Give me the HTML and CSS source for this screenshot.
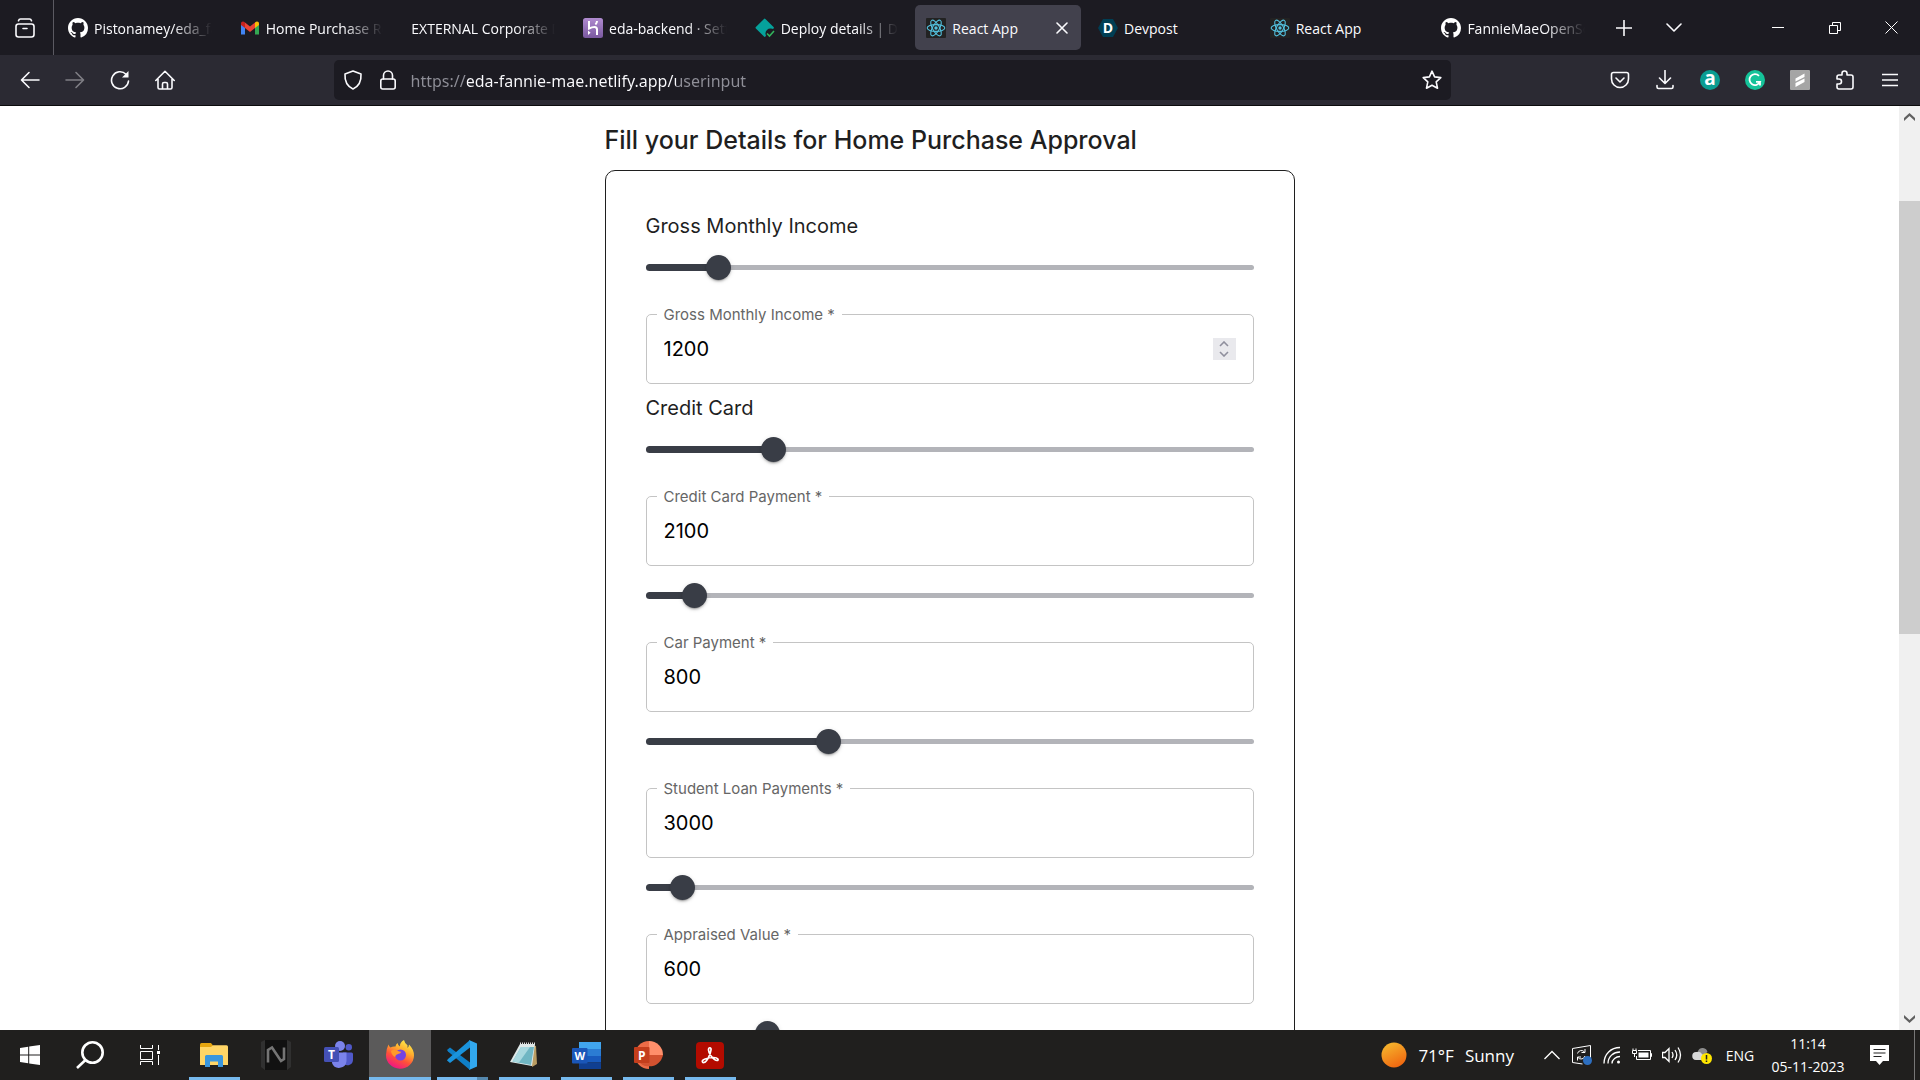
FILE: index.html
```html
<!DOCTYPE html>
<html lang="en">
<head>
<meta charset="utf-8">
<title>React App</title>
<link rel="stylesheet" href="styles.css">
</head>
<body>
<svg class="defs" aria-hidden="true">
  <symbol id="github" viewBox="0 0 16 16"><path fill="#fff" d="M8 0C3.58 0 0 3.58 0 8c0 3.54 2.29 6.53 5.47 7.59.4.07.55-.17.55-.38 0-.19-.01-.82-.01-1.49-2.01.37-2.53-.49-2.69-.94-.09-.23-.48-.94-.82-1.13-.28-.15-.68-.52-.01-.53.63-.01 1.08.58 1.23.82.72 1.21 1.87.87 2.33.66.07-.52.28-.87.51-1.07-1.78-.2-3.64-.89-3.64-3.95 0-.87.31-1.59.82-2.15-.08-.2-.36-1.02.08-2.12 0 0 .67-.21 2.2.82.64-.18 1.32-.27 2-.27.68 0 1.36.09 2 .27 1.53-1.04 2.2-.82 2.2-.82.44 1.1.16 1.92.08 2.12.51.56.82 1.27.82 2.15 0 3.07-1.87 3.75-3.65 3.95.29.25.54.73.54 1.48 0 1.07-.01 1.93-.01 2.2 0 .21.15.46.55.38A8.013 8.013 0 0016 8c0-4.42-3.58-8-8-8z"/></symbol>
  <symbol id="react" viewBox="0 0 20 20"><rect width="20" height="20" rx="1" fill="#222"/><g fill="none" stroke="#53c1de" stroke-width="1.1"><ellipse cx="10" cy="10" rx="8.8" ry="3.4"/><ellipse cx="10" cy="10" rx="8.8" ry="3.4" transform="rotate(60 10 10)"/><ellipse cx="10" cy="10" rx="8.8" ry="3.4" transform="rotate(120 10 10)"/></g><circle cx="10" cy="10" r="1.7" fill="#53c1de"/></symbol>
</svg>

<header class="chrome">
  <div class="tabbar">
    <button class="view" aria-label="Firefox View"><svg width="20" height="20" viewBox="0 0 20 20" class="line"><rect x="1" y="6" width="18" height="13" rx="2.5"/><path d="M3.5 2.8Q4 1 5.5 1h9Q16 1 16.500 2.800M8 10.500h4"/></svg></button>
    <nav class="tabs">
      <div class="tab"><svg class="fav"><use href="#github"/></svg><button class="tab-name fade">Pistonamey/eda_fannie</button></div>
      <div class="tab"><svg class="fav" viewBox="0 0 20 20"><path fill="#4285f4" d="M1 5v11.500h4V9z"/><path fill="#34a853" d="M19 5v11.500h-4V9z"/><path fill="#ea4335" d="M5 4.500l5 4 5-4V10l-5 4-5-4z"/><path fill="#c5221f" d="M1 5.500C1 3.200 3.500 2.800 5 4.500V10L1 7z"/><path fill="#fbbc04" d="M19 5.500C19 3.200 16.500 2.800 15 4.500V10l4-3z"/></svg><button class="tab-name fade">Home Purchase Request</button></div>
      <div class="tab"><button class="tab-name fade">EXTERNAL Corporate Day</button></div>
      <div class="tab"><svg class="fav" viewBox="0 0 20 20"><defs><linearGradient id="hk" x2="0" y2="1"><stop stop-color="#b08bd0"/><stop offset="1" stop-color="#79589f"/></linearGradient></defs><rect width="20" height="20" rx="2.500" fill="url(#hk)"/><path fill="none" stroke="#fff" stroke-width="2" d="M6 3v7.500q3-1.500 5.500-1.500 2.500 0 2.500 2.500V17M14 3q0 2-1.600 3.500"/><path fill="#fff" d="M5 12.500l2.600 2.200L5 17z"/></svg><button class="tab-name fade">eda-backend · Settings</button></div>
      <div class="tab"><svg class="fav" viewBox="0 0 20 20"><rect x="3" y="3" width="13.500" height="13.500" rx="1" fill="#05a29b" transform="rotate(45 9.700 9.700)"/><circle cx="15.500" cy="15.500" r="5" fill="#1c1b22"/><path d="M12 15.500l2.500 2.500 4.500-5" fill="none" stroke="#32b45c" stroke-width="1.600"/></svg><button class="tab-name fade">Deploy details | Deploys</button></div>
      <div class="tab active"><svg class="fav"><use href="#react"/></svg><button class="tab-name">React App</button><button class="close" aria-label="Close tab"><svg width="12" height="12" viewBox="0 0 12 12" class="line"><path d="M1 1l10 10M11 1L1 11"/></svg></button></div>
      <div class="tab"><svg class="fav" viewBox="0 0 20 20"><path fill="#003e54" d="M5 1h10l5 9-5 9H5l-5-9z"/><text x="10" y="15" text-anchor="middle" class="glyph" font-size="14">D</text></svg><button class="tab-name">Devpost</button></div>
      <div class="tab"><svg class="fav"><use href="#react"/></svg><button class="tab-name">React App</button></div>
      <div class="tab"><svg class="fav"><use href="#github"/></svg><button class="tab-name fade">FannieMaeOpenSource</button></div>
    </nav>
    <div class="tab-tools">
      <button aria-label="New tab"><svg width="16" height="16" viewBox="0 0 16 16" class="line"><path d="M8 .5v15M.5 8h15"/></svg></button>
      <button aria-label="List all tabs"><svg width="16" height="10" viewBox="0 0 16 10" class="line"><path d="M1 1l7 7 7-7"/></svg></button>
    </div>
    <div class="window-tools">
      <button aria-label="Minimize"><svg width="12" height="12" viewBox="0 0 12 12" class="thin"><path d="M0 5.500h12"/></svg></button>
      <button aria-label="Restore"><svg width="12" height="12" viewBox="0 0 12 12" class="thin"><path d="M.5 3.500h8v8h-8zM3.500 3V.5h8v8H9"/></svg></button>
      <button aria-label="Close"><svg width="13" height="13" viewBox="0 0 13 13" class="thin"><path d="M.5.5l12 12M12.500.5l-12 12"/></svg></button>
    </div>
  </div>

  <div class="toolbar">
    <div class="tools">
      <button aria-label="Back"><svg width="20" height="20" viewBox="0 0 20 20" class="line"><path d="M19 10H2M9 2.500L1.500 10 9 17.500"/></svg></button>
      <button aria-label="Forward" disabled><svg width="20" height="20" viewBox="0 0 20 20" class="line dim"><path d="M1 10h17M11 2.500l7.500 7.500-7.500 7.500"/></svg></button>
      <button aria-label="Reload"><svg width="20" height="20" viewBox="0 0 20 20" class="line"><path d="M18.500 11a8.500 8.500 0 1 1-2.500-6.800"/><path d="M18.500 1v6.500H12z" fill="#fbfbfe" stroke="none"/></svg></button>
      <button aria-label="Home"><svg width="20" height="20" viewBox="0 0 20 20" class="line"><path d="M.8 10.500L10 1.300l9.200 9.200M3 9v8.500q0 1.500 1.500 1.500h11q1.500 0 1.500-1.500V9M7.500 19v-5q0-1.500 1.500-1.500h2q1.500 0 1.500 1.500v5"/></svg></button>
    </div>
    <div class="spacer"></div>
    <div class="urlbar">
      <button aria-label="Tracking protection"><svg width="20" height="20" viewBox="0 0 20 20" class="line"><path d="M10 1l8 3c.4 6.500-1.500 12-8 15C3.500 16 1.600 10.500 2 4z"/></svg></button>
      <button aria-label="Site security"><svg width="20" height="20" viewBox="0 0 20 20" class="line"><rect x="2.800" y="9" width="14.400" height="10" rx="2"/><path d="M5.500 9V5.500a4.500 4.500 0 0 1 9 0V9"/></svg></button>
      <input class="url" type="text" aria-label="Address" value="https://eda-fannie-mae.netlify.app/userinput">
      <button aria-label="Bookmark this page"><svg width="20" height="20" viewBox="0 0 20 20" class="line"><path d="M10 1.200l2.600 5.700 6.200.7-4.600 4.200 1.300 6.400L10 15.200l-5.500 3 1.300-6.400L1.200 7.600l6.200-.7z"/></svg></button>
    </div>
    <div class="spacer"></div>
    <div class="tools">
      <button aria-label="Pocket"><svg width="20" height="20" viewBox="0 0 20 20" class="line"><path d="M3.500 2.500h13Q18.500 2.500 18.500 4.500V9a8.500 8.500 0 0 1-17 0V4.500Q1.500 2.500 3.500 2.500zM6 8l4 4 4-4"/></svg></button>
      <button aria-label="Downloads"><svg width="20" height="20" viewBox="0 0 20 20" class="line"><path d="M10 .5V13M4.500 8l5.500 5.500L15.500 8M2 15.500v1.500q0 1.500 1.500 1.500h13q1.500 0 1.500-1.500v-1.500"/></svg></button>
      <button aria-label="Extension a"><svg width="20" height="20" viewBox="0 0 20 20"><circle cx="10" cy="10" r="10" fill="#0a9d92"/><text x="10" y="15" text-anchor="middle" class="glyph" font-size="19">a</text></svg></button>
      <button aria-label="Grammarly"><svg width="20" height="20" viewBox="0 0 20 20"><circle cx="10" cy="10" r="10" fill="#15c39a"/><path fill="none" stroke="#fff" stroke-width="1.800" d="M14 5.800a5.500 5.500 0 1 0 1 6H11M15 11v4.500"/></svg></button>
      <button aria-label="Extension S"><svg width="20" height="20" viewBox="0 0 20 20"><rect width="20" height="20" rx="1" fill="#a5a5a5"/><path fill="#fff" d="M5.500 8.500L14.500 3.500V7L5.500 11.500zM5.500 13L14.500 8.500V12L5.500 17z"/></svg></button>
      <button aria-label="Extensions"><svg width="20" height="20" viewBox="0 0 20 20" class="line"><path d="M7 5V3.500a2.500 2.500 0 0 1 5 0V5h4q2 0 2 2v10q0 2-2 2H4q-2 0-2-2v-3h2a2 2 0 0 0 0-5H2V7q0-2 2-2z"/></svg></button>
      <button aria-label="Menu"><svg width="16" height="14" viewBox="0 0 16 14" class="line"><path d="M.5 1.500h15M.5 7h15M.5 12.500h15"/></svg></button>
    </div>
  </div>
</header>

<div class="viewport">
  <main class="page">
    <h1>Fill your Details for Home Purchase Approval</h1>
    <form class="card">
      <h2>Gross Monthly Income</h2>
      <div class="slider"><span class="rail"></span><span class="fill" style="width:12%"></span><input type="range" aria-label="Gross monthly income slider" min="0" max="10000" value="1200"></div>
      <fieldset class="field"><legend><label for="income">Gross Monthly Income *</label></legend><div class="value"><input id="income" type="number" value="1200"><span class="spin"><svg width="10" height="16" viewBox="0 0 10 16"><path d="M1 5L5 1l4 4M1 11l4 4 4-4" fill="none" stroke="#8f8f9d" stroke-width="1.600"/></svg></span></div></fieldset>

      <h2>Credit Card</h2>
      <div class="slider"><span class="rail"></span><span class="fill" style="width:21%"></span><input type="range" aria-label="Credit card payment slider" min="0" max="10000" value="2100"></div>
      <fieldset class="field"><legend><label for="credit">Credit Card Payment *</label></legend><div class="value"><input id="credit" type="number" value="2100"></div></fieldset>

      <div class="slider"><span class="rail"></span><span class="fill" style="width:8%"></span><input type="range" aria-label="Car payment slider" min="0" max="10000" value="800"></div>
      <fieldset class="field"><legend><label for="car">Car Payment *</label></legend><div class="value"><input id="car" type="number" value="800"></div></fieldset>

      <div class="slider"><span class="rail"></span><span class="fill" style="width:30%"></span><input type="range" aria-label="Student loan payments slider" min="0" max="10000" value="3000"></div>
      <fieldset class="field"><legend><label for="loan">Student Loan Payments *</label></legend><div class="value"><input id="loan" type="number" value="3000"></div></fieldset>

      <div class="slider"><span class="rail"></span><span class="fill" style="width:6%"></span><input type="range" aria-label="Appraised value slider" min="0" max="10000" value="600"></div>
      <fieldset class="field"><legend><label for="appraised">Appraised Value *</label></legend><div class="value"><input id="appraised" type="number" value="600"></div></fieldset>

      <div class="slider"><span class="rail"></span><span class="fill" style="width:20%"></span><input type="range" aria-label="Next value slider" min="0" max="10000" value="2000"></div>
    </form>
  </main>
  <div class="scrollbar">
    <button aria-label="Scroll up"><svg width="11" height="9" viewBox="0 0 11 9"><path d="M0 6l5.500-5L11 6v3L5.500 4 0 9z" fill="#606060"/></svg></button>
    <span class="before"></span><span class="thumb"></span><span class="after"></span>
    <button aria-label="Scroll down"><svg width="11" height="9" viewBox="0 0 11 9"><path d="M0 3l5.500 5L11 3V0L5.500 5 0 0z" fill="#606060"/></svg></button>
  </div>
</div>

<footer class="taskbar">
  <div class="system">
    <button aria-label="Start"><svg width="20" height="20" viewBox="0 0 20 20"><path fill="#fff" d="M0 2.900L8.200 1.700v7.800H0zM9.200 1.500L20 0v9.500H9.200zM0 10.500h8.200v7.800L0 17.100zM9.200 10.500H20V20L9.200 18.500z"/></svg></button>
    <button aria-label="Search"><svg width="28" height="28" viewBox="0 0 28 28"><g fill="none" stroke="#fff" stroke-width="2.600"><circle cx="16.500" cy="11.500" r="10.200"/><path d="M9.500 19L1 27"/></g></svg></button>
    <button aria-label="Task view"><svg width="20" height="20" viewBox="0 0 20 20" class="thin"><path d="M.5 0v3.500h12V0M.5 20v-3.500h12V20M.5 6.500h12v8H.5zM18.500 0v5M18.500 10v10"/><path d="M17 6h3v3h-3z" fill="#fff" stroke="none"/></svg></button>
  </div>
  <div class="apps">
    <button class="app open" aria-label="File Explorer"><svg width="28" height="24" viewBox="0 0 28 24"><path fill="#e5a50f" d="M0 1.500Q0 0 1.500 0H11l2 2.500V6H0z"/><path fill="#ffd566" d="M0 4h11l2-1.800h13.500q1.500 0 1.500 1.500V22H0z"/><path fill="#3a96dd" d="M5 24V13.500Q5 12 6.500 12h15Q23 12 23 13.500V24h-5v-5.500h-8V24z"/></svg></button>
    <button class="app" aria-label="N app"><svg width="30" height="30" viewBox="0 0 30 30"><path fill="#303030" d="M0 2l4-2v30l-4-3zM30 2l-4-2v30l4-3z"/><path fill="#111" d="M4 0h22v30H4z"/><path fill="none" stroke="#757575" stroke-width="2.600" d="M7 22.500V10l4-2.500 9 13.500 3-2V7.500"/></svg></button>
    <button class="app" aria-label="Teams"><svg width="29" height="28" viewBox="0 0 29 28"><circle cx="16" cy="5" r="5" fill="#7b83eb"/><circle cx="24.800" cy="6.200" r="3.200" fill="#5059c9"/><path fill="#5059c9" d="M19 11.500h8.500q1.500 0 1.500 1.500v6a5.500 5.500 0 0 1-9 4z"/><path fill="#7b83eb" d="M9 11.500h13.500V20a7.500 7.500 0 0 1-14.500 2z"/><rect y="6" width="15" height="15" rx="1.500" fill="#4450b5"/><text x="7.500" y="18" text-anchor="middle" class="glyph" font-size="12">T</text></svg></button>
    <button class="app open current" aria-label="Firefox"><svg width="30" height="30" viewBox="0 0 30 30"><defs><linearGradient id="fx" x1=".8" x2=".3" y2="1"><stop stop-color="#fff44f"/><stop offset=".35" stop-color="#ffb02e"/><stop offset=".65" stop-color="#ff5238"/><stop offset="1" stop-color="#f0108a"/></linearGradient></defs><path fill="url(#fx)" d="M3.500 4.500q.5 2 2 3Q8 6 10.500 6.500 10.500 4.500 12.500 3q.5 2.500 2.500 3.500Q14.500 2.500 19 0q.5 3 3.500 5.200V8q1.500-1.500 1.500-3.500Q29 9.500 29 15.500A14 13.500 0 0 1 1 15Q1 9 3.500 4.500z"/><circle cx="15.500" cy="15" r="5.500" fill="#7543e3"/><path fill="#ff9a2a" d="M6 11q3-2 6-.5 2 1.500 4.500 1-1 2-3.500 2.500-2.500.5-3 3Q6.500 15 6 11z"/></svg></button>
    <button class="app open grouped" aria-label="Visual Studio Code"><svg width="30" height="30" viewBox="0 0 30 30"><path fill="#0f7fc7" d="M0 10l3-2.500 20 15V30L1 11.500z"/><path fill="#1a93dc" d="M0 20.500L3 23 23 7.500V0L1 19z"/><path fill="#32a8ee" d="M22 0l8 3.500v23L22 30q1-1 1-3V3q0-2-1-3z"/></svg></button>
    <button class="app open" aria-label="Notepad"><svg width="28" height="26" viewBox="0 0 28 26"><path fill="#b99c62" d="M22 3l4 1 1 18-5 3z"/><path fill="#dfe9e9" d="M10 2h15l-3 22L0 20z"/><path fill="#6fb6c3" d="M11 5h13l-3 18L2.500 19.500z"/><path fill="#a8d8df" d="M11 5h9L9 20.500 2.500 19.500z"/><path stroke="#ddd" stroke-width="2" stroke-dasharray="1 1" d="M10 1.500h15"/></svg></button>
    <button class="app open" aria-label="Word"><svg width="29" height="27" viewBox="0 0 29 27"><path fill="#41a5ee" d="M7 0h22v7H7z"/><path fill="#2b7cd3" d="M7 7h22v7H7z"/><path fill="#185abd" d="M7 14h22v6.500H7z"/><path fill="#103f91" d="M7 20.500h22V27H7z"/><rect y="6" width="15.500" height="15.500" rx="1" fill="#1a56b8"/><text x="7.800" y="18" text-anchor="middle" class="glyph" font-size="11">W</text></svg></button>
    <button class="app open" aria-label="PowerPoint"><svg width="29" height="28" viewBox="0 0 29 28"><path fill="#ed6c47" d="M15 14V0a14 14 0 0 0 0 28z"/><path fill="#ff8f6b" d="M15 0a14 14 0 0 1 14 14H15z"/><path fill="#d35230" d="M1.500 14H29a14 14 0 0 1-27.500 0z"/><rect y="6" width="15.500" height="16" rx="1" fill="#c43e1c"/><text x="7.800" y="18.500" text-anchor="middle" class="glyph" font-size="12">P</text></svg></button>
    <button class="app open" aria-label="Acrobat"><svg width="28" height="27" viewBox="0 0 28 27"><rect width="28" height="27" rx="4" fill="#b30b00"/><path fill="none" stroke="#fff" stroke-width="1.700" d="M6.500 20c-1.500-2 5-4.500 11-4.500 5 0 5.500 3 3.500 3C18 18.500 12.500 12 12.500 8c0-3 3-3 2.500 0-.5 4-4 12-7 12.500q-1 .2-1.500-.5z"/></svg></button>
  </div>
  <div class="tray">
    <button class="weather"><svg width="26" height="26" viewBox="0 0 26 26"><defs><linearGradient id="sun" x1=".2" x2=".7" y2="1"><stop stop-color="#f5b82e"/><stop offset="1" stop-color="#f0640f"/></linearGradient></defs><circle cx="13" cy="13" r="12.500" fill="url(#sun)"/></svg><span>71°F</span><span>Sunny</span></button>
    <button class="status" aria-label="Show hidden icons"><svg width="16" height="10" viewBox="0 0 16 10" class="thin bold"><path d="M.5 9L8 1.500 15.500 9"/></svg></button>
    <button class="status" aria-label="Sync"><svg width="20" height="20" viewBox="0 0 20 20" class="thin"><path d="M.5 3.500l18-3v14M.5 3.500v14l10 1.500M5.500 8.500a4 4 0 0 1 7-1.500M13 4v3.500h-3.500M13 11a4 4 0 0 1-7 1.500M5.500 15.500V12H9"/><circle cx="15.500" cy="15.500" r="4.500" fill="#2d6fc1" stroke="none"/></svg></button>
    <button class="status" aria-label="Network"><svg width="18" height="18" viewBox="0 0 18 18" class="thin bold"><path d="M1 17.500C1 8 8 1.500 17 1.500M5 17.500C5 10.500 10.500 6 17 6M9 17.500c0-4 4-7 8-7"/><circle cx="15.500" cy="16" r="1.500" fill="#fff" stroke="none"/></svg></button>
    <button class="status" aria-label="Battery"><svg width="20" height="14" viewBox="0 0 20 14" class="thin"><path d="M6 2.500h12.500v9h-14V8M18.500 5.500h1v3h-1M.5 2.500h4v3h-4zM1 .5V2M4 .5V2M2.500 6v3"/><path d="M6.500 4.500h10v5h-10z" fill="#fff" stroke="none"/></svg></button>
    <button class="status" aria-label="Volume"><svg width="20" height="18" viewBox="0 0 20 18" class="thin bold"><path d="M.5 6.500H3L7 2.500v13L3 11.500H.5zM10 6q2 3 0 6M13 4q3.500 5 0 10M16 1.500q5 7.500 0 15"/></svg></button>
    <button class="status" aria-label="OneDrive"><svg width="20" height="18" viewBox="0 0 20 18"><path fill="#8c8c8c" d="M6 5a5 5 0 0 1 9.500 1l-8 6z"/><path fill="#d8d8d8" d="M4 14a4 4 0 0 1 .5-8Q8 5 10 8l6 6z"/><circle cx="14.500" cy="12.500" r="5.500" fill="#ffe600"/><path stroke="#222" stroke-width="1.500" d="M14.500 9v4.500M14.500 14.500V16"/></svg></button>
    <button class="language">ENG</button>
    <button class="clock"><time>11:14</time><time>05-11-2023</time></button>
    <button class="notes" aria-label="Notifications"><svg width="19" height="20" viewBox="0 0 19 20"><path fill="#fff" d="M0 0h19v16h-6l-3.500 4L6 16H0z"/><path stroke="#222" stroke-width="1.200" d="M3.500 4.500h12M3.500 8h12M3.500 11.500h8"/></svg></button>
    <span class="desktop"></span>
  </div>
</footer>
</body>
</html>
```
FILE: styles.css
```css
* { box-sizing: border-box; }
body {
  margin: 0;
  height: 100vh;
  display: flex;
  flex-direction: column;
  overflow: hidden;
  background: #fff;
  font-family: "Open Sans", "Noto Sans", sans-serif;
}
button {
  margin: 0;
  padding: 0;
  border: 0;
  background: none;
  color: inherit;
  font: inherit;
  display: flex;
  align-items: center;
  justify-content: center;
}
svg { flex: none; display: block; }
.defs { width: 0; height: 0; position: absolute; }
.line { fill: none; stroke: #fbfbfe; stroke-width: 1.6; stroke-linecap: round; stroke-linejoin: round; }
.thin { fill: none; stroke: #fff; stroke-width: 1; }
.bold { stroke-width: 1.3; }
.dim { opacity: .4; }
.glyph { fill: #fff; font-family: "Open Sans", sans-serif; font-weight: 700; }

/* Browser chrome */
.chrome { flex: none; color: #fbfbfe; border-bottom: 1px solid #0c0c0d; }
.tabbar { height: 55px; display: flex; background: #1c1b22; }
.view { width: 54px; padding-right: 4px; border-right: 1px solid #5b5a62; }
.tabs { flex: 1; min-width: 0; display: flex; gap: 6px; padding: 5px 0 5px 3px; }
.tab { flex: 1 1 0; min-width: 0; display: flex; align-items: center; gap: 6px; padding: 0 11px; border-radius: 5px; font-size: 14px; }
.tab.active { background: #42414d; }
.fav { width: 20px; height: 20px; }
.tab-name { flex: 1; min-width: 0; justify-content: flex-start; overflow: hidden; white-space: nowrap; line-height: 24px; padding-top: 2px; }
.fade { mask-image: linear-gradient(to left, transparent, #000 40px); }
.close { width: 16px; }
.tab-tools { display: flex; margin-left: 3px; }
.tab-tools button { width: 50px; }
.window-tools { display: flex; margin-left: 50px; }
.window-tools button { width: 57px; }
.toolbar { height: 50px; display: flex; padding: 0 7px; background: #2b2a33; }
.tools { display: flex; }
.tools button { width: 45px; }
.spacer { flex: 147; }
.urlbar { flex: 1117; display: flex; margin: 5px 0; padding: 0 2px; border-radius: 5px; background: #1c1b22; }
.urlbar button { width: 35px; }
.url {
  flex: 1;
  min-width: 0;
  margin-left: 5px;
  padding: 2px 0 0;
  border: 0;
  outline: 0;
  color: transparent;
  background: linear-gradient(to right, #8f8f98 56px, #fbfbfe 56px, #fbfbfe 265px, #8f8f98 265px);
  background-clip: text;
  font: 16px "Noto Sans", "Open Sans", sans-serif;
}

/* Web page */
.viewport { flex: 1; min-height: 0; display: flex; font-family: Inter, sans-serif; }
.page { flex: 1; overflow: hidden; display: flex; flex-direction: column; align-items: center; color: #1f1f1f; }
h1, .card { width: 100%; max-width: 690px; }
h1 { flex: none; margin: 14px 0 10px; font-size: 25px; line-height: 40px; font-weight: 500; }
.card { flex: none; padding: 40px; border: 1px solid #1f1f1f; border-radius: 10px; }
h2 { margin: 0; font-size: 20px; line-height: 31px; font-weight: 400; }
.slider { display: grid; align-items: center; padding: 17px 0 34px; }
.slider > * { grid-area: 1 / 1; }
h2 + .slider { padding-top: 13px; }
.rail { height: 5px; border-radius: 5px; background: #b3b4b9; }
.fill { height: 7px; border-radius: 5px; background: #393d46; }
input[type="range"] { appearance: none; width: calc(100% + 24px); height: 25px; margin: 0 -12px; background: transparent; }
input[type="range"]::-webkit-slider-thumb {
  appearance: none;
  width: 25px;
  height: 25px;
  border-radius: 50%;
  background: #393d46;
  box-shadow: 0 3px 1px -2px rgba(0, 0, 0, .2), 0 2px 2px rgba(0, 0, 0, .14), 0 1px 5px rgba(0, 0, 0, .12);
}
.field { height: 70px; min-width: 0; margin: 0; padding: 0 10px; border: 1px solid #c4c4c4; border-radius: 5px; }
.field legend { padding: 0 7px; font-size: 15px; line-height: 1px; color: #666; }
.value { height: 68px; display: flex; align-items: center; padding: 0 7px; }
.value input { flex: 1; min-width: 0; padding: 0; border: 0; outline: 0; background: none; appearance: textfield; font: 20px Inter, sans-serif; color: #000; }
.value input::-webkit-inner-spin-button { appearance: none; margin: 0; }
.spin { width: 23px; height: 22px; display: flex; align-items: center; justify-content: center; background: #e9e9ed; }
.field + h2 { margin-top: 9px; }

.scrollbar { flex: none; width: 21px; display: flex; flex-direction: column; background: #f0f0f0; }
.scrollbar button { height: 21px; }
.before { flex: 74; }
.thumb { flex: 433; background: #cdcdcd; }
.after { flex: 375; }

/* Taskbar */
.taskbar { flex: none; height: 50px; display: flex; background: #201f1e; color: #fff; }
.system { display: flex; margin-right: 3px; }
.system button { width: 60px; }
.apps { display: flex; }
.app { width: 62px; border: solid transparent; border-width: 3px 0; }
.open { background: linear-gradient(#76b9ed, #76b9ed) center bottom / 51px 3px no-repeat border-box; }
.current { background: linear-gradient(#76b9ed, #76b9ed) center bottom / 100% 3px no-repeat border-box #5b5a5a; }
.grouped { background: linear-gradient(to right, #76b9ed 40px, #5588ad 40px) center bottom / 51px 3px no-repeat border-box; }
.tray { flex: 1; display: flex; justify-content: flex-end; }
.weather { gap: 11px; margin-right: 23px; font-size: 17px; }
.status { width: 30px; }
.language { width: 46px; font-size: 14px; }
.clock { width: 90px; flex-direction: column; font-size: 14px; line-height: 23px; }
.notes { width: 61px; padding-right: 8px; }
.desktop { width: 6px; border-left: 1px solid #777; }
```
